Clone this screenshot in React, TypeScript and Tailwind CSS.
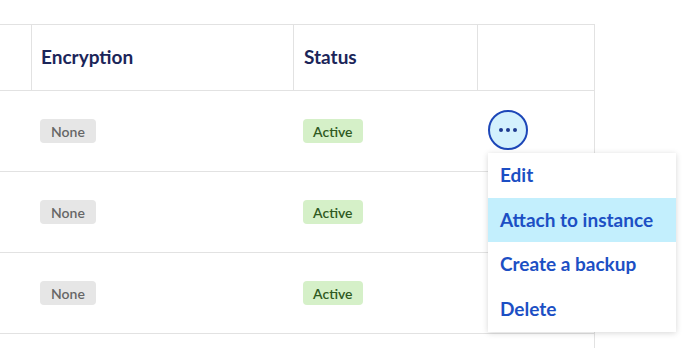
import React from "react";

const rows = [
  { encryption: "None", status: "Active" },
  { encryption: "None", status: "Active" },
  { encryption: "None", status: "Active" },
];

const menuItems = ["Edit", "Attach to instance", "Create a backup", "Delete"];

function Badge({ label, tone }: { label: string; tone: "gray" | "green" }) {
  return (
    <span
      className={
        tone === "gray"
          ? "inline-flex h-6 items-center rounded-[4px] bg-[#e6e6e6] px-[11px] text-[14px] font-semibold text-[#666666]"
          : "inline-flex h-6 items-center rounded-[4px] bg-[#d5f0c8] px-[10px] text-[14px] font-semibold text-[#2f5a22]"
      }
    >
      {label}
    </span>
  );
}

function ActionMenu() {
  return (
    <div className="relative flex h-full items-start justify-start pl-[10px] pt-[19px]">
      <button className="grid h-10 w-10 place-items-center rounded-full border-2 border-[#1d47b8] bg-[#d3f1fd]">
        <span className="flex gap-[3px]">
          <span className="h-1 w-1 rounded-full bg-[#1d3a8f]" />
          <span className="h-1 w-1 rounded-full bg-[#1d3a8f]" />
          <span className="h-1 w-1 rounded-full bg-[#1d3a8f]" />
        </span>
      </button>
      {/* open dropdown */}
      <div className="absolute left-[10px] top-[62px] z-10 w-[188px] bg-white shadow-[0_1px_6px_rgba(0,0,0,0.16)]">
        {menuItems.map((item, i) => (
          <div
            key={item}
            className={
              i === 1
                ? "flex h-[44px] items-center bg-[#c3effd] pl-3 text-[19px] font-bold text-[#1c4fc4]"
                : "flex h-[45px] items-center pl-3 text-[19px] font-bold text-[#1c4fc4]"
            }
          >
            {item}
          </div>
        ))}
      </div>
    </div>
  );
}

export default function App() {
  return (
    <div className="h-[348px] w-[691px] overflow-hidden bg-white pt-6 font-['Lato',sans-serif]">
      <div className="w-[595px] border-r border-[#e2e2e2]">
        {/* header */}
        <div className="grid h-[67px] grid-cols-[32px_262px_184px_117px] border-y border-[#e2e2e2]">
          <div className="border-r border-[#e2e2e2]" />
          <div className="flex items-center border-r border-[#e2e2e2] pl-[9px] text-[19px] font-bold text-[#1b2559]">
            Encryption
          </div>
          <div className="flex items-center border-r border-[#e2e2e2] pl-[10px] text-[19px] font-bold text-[#1b2559]">
            Status
          </div>
          <div />
        </div>
        {rows.map((r, i) => (
          <div
            key={i}
            className="grid h-[81px] grid-cols-[32px_262px_184px_117px] border-b border-[#e2e2e2]"
          >
            <div />
            <div className="flex items-center pl-[8px]">
              <Badge label={r.encryption} tone="gray" />
            </div>
            <div className="flex items-center pl-[9px]">
              <Badge label={r.status} tone="green" />
            </div>
            <div>{i === 0 && <ActionMenu />}</div>
          </div>
        ))}
        <div className="h-6" />
      </div>
    </div>
  );
}
